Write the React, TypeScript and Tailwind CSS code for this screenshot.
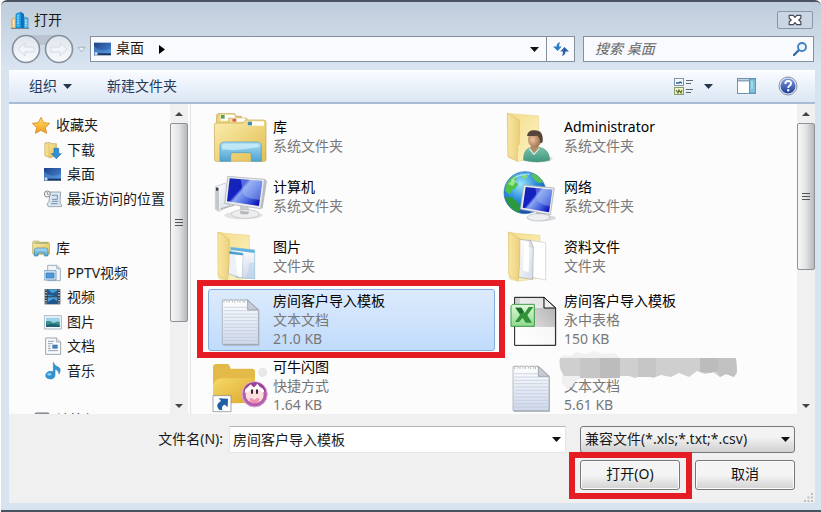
import React from "react";

type IconProps = { box: string; className?: string; children: React.ReactNode };

function Art({ box, className = "h-[54px] w-14", children }: IconProps) {
  return (
    <svg viewBox={box} className={`shrink-0 ${className}`} aria-hidden="true">
      {children}
    </svg>
  );
}

function Defs() {
  const grads: [string, string, string, string, string, string, string][] = [
    ["gFolder", "0", "0", "1", "1", "#fbeeb0", "#e3bd50"],
    ["gFolderPale", "0", "0", "1", "1", "#f3dc8a", "#fdf3c4"],
    ["gFlap", "0", "0", "1", "0", "#f8e7a0", "#ecd07c"],
    ["gBlue", "0", "0", "0", "1", "#a9dcf3", "#4ba3d3"],
    ["gPaper", "0", "0", "1", "1", "#ffffff", "#d3dbe8"],
    ["gDesk", "0", "0", "1", "1", "#1e3f86", "#4a91dc"],
    ["gNote", "0", "0", "0", "1", "#fdfefe", "#cfd8ea"],
    ["gGold", "0", "0", "1", "1", "#f6d868", "#dba92c"],
    ["gStar", "0", "0", "0", "1", "#ffe36a", "#f09a1c"],
    ["gXls", "0", "0", "0", "1", "#e4f9dc", "#8fd98c"],
    ["gSheet", "1", "0", "0", "1", "#a9a9a9", "#ffffff"],
    ["gTeal", "0", "0", "0", "1", "#7cc3ac", "#3f957c"],
    ["gNav", "0", "0", "0", "1", "#dfe5ec", "#f8fafc"],
    ["gHelp", "0", "0", "0", "1", "#7d9ae0", "#1f3d98"],
  ];
  return (
    <svg className="absolute h-0 w-0" aria-hidden="true">
      <defs>
        {grads.map(([id, x1, y1, x2, y2, a, b]) => (
          <linearGradient key={id} id={id} x1={x1} y1={y1} x2={x2} y2={y2}>
            <stop offset="0" stopColor={a} />
            <stop offset="1" stopColor={b} />
          </linearGradient>
        ))}
        <linearGradient id="gScreen" x1="0" y1="0" x2="1" y2="0.7">
          <stop offset="0" stopColor="#1428a8" />
          <stop offset="0.42" stopColor="#1420c4" />
          <stop offset="0.5" stopColor="#8ba6f0" />
          <stop offset="0.75" stopColor="#4a68e0" />
          <stop offset="1" stopColor="#1018b8" />
        </linearGradient>
        <radialGradient id="gGlobe" cx="0.4" cy="0.3" r="0.7">
          <stop offset="0" stopColor="#9be6fb" />
          <stop offset="0.5" stopColor="#2f92de" />
          <stop offset="1" stopColor="#1a4dac" />
        </radialGradient>
        <radialGradient id="gSkin" cx="0.35" cy="0.5" r="0.7">
          <stop offset="0" stopColor="#eec29c" />
          <stop offset="1" stopColor="#8f6040" />
        </radialGradient>
      </defs>
    </svg>
  );
}

/* ---------- large file icons ---------- */

const LibraryBig = () => (
  <Art box="66 30 168 162">
    <path d="M80 72V46q0-5 6-5h48l4 8h16v23z" fill="#eed77f" stroke="#b99a46" strokeWidth="2" />
    <path d="M92 44h40l4 8v10H92z" fill="#fff" />
    <rect x="93" y="45" width="11" height="11" fill="#56a05a" />
    <path d="M116 76V54h54l6 22z" fill="#f1dc8a" stroke="#b99a46" strokeWidth="1.5" />
    <path d="M126 55h40v10h-40z" fill="#fff" />
    <rect x="127" y="56" width="12" height="9" fill="#d9603c" />
    <path d="M73 74q0-5 5-5h82l6-9h54q8 0 8 6v113q0 5-5 5H79q-5 0-5-5z" fill="url(#gFolder)" stroke="#c9a650" strokeWidth="2" />
    <path d="M172 64h50v13h-50z" fill="#fff" />
    <rect x="173" y="65" width="13" height="11" fill="#4a8aa8" />
    <path d="M90 184v-44q0-14 14-14h96q14 0 14 14v44h-30v-20q0-6-6-6h-50q-6 0-6 6v20z" fill="url(#gBlue)" stroke="#4d9cc2" strokeWidth="2" />
    <path d="M95 140q0-9 10-9h94q10 0 10 9-54 14-114 8z" fill="#c9ecf8" opacity=".8" />
  </Art>
);

const ComputerBig = () => (
  <Art box="66 210 168 162">
    <ellipse cx="160" cy="346" rx="58" ry="12" fill="#c9ccd0" opacity=".5" />
    <path d="M76 260l28-10 16 8v60l-34 16-10-6z" fill="url(#gPaper)" stroke="#b7babf" strokeWidth="2" />
    <path d="M77 260l10 4v68l-10-5z" fill="#c3c6ca" />
    <rect x="78" y="263" width="7" height="9" fill="#3c4044" />
    <path d="M92 326l40-10" stroke="#aaa" strokeWidth="3" />
    <path d="M150 318l26 3 2 22h-28z" fill="#c8cbcf" />
    <ellipse cx="166" cy="342" rx="42" ry="13" fill="#eceef0" stroke="#b9bcc0" strokeWidth="2" />
    <path d="M150 333l28 2-4 8h-22z" fill="#b4b7bb" />
    <path d="M113 229l111 9-12 88-108-16z" fill="#e9ebee" stroke="#a2a7ac" strokeWidth="2" />
    <path d="M119 235l98 8-10 75-96-14z" fill="url(#gScreen)" />
    <path d="M152 238l65 5-8 57q-34-4-48-15z" fill="#a8c1f7" opacity=".45" />
    <path d="M224 238l7 5-13 82-6 1z" fill="#b9bdc3" />
  </Art>
);

function OpenFolder({ box, shift, children }: { box: string; shift: number; children?: React.ReactNode }) {
  return (
    <Art box={box}>
      <g transform={`translate(${shift} 0)`}>
        <path d="M84 396l20 4 74 6v128l-66 10-26-8z" fill="url(#gFolderPale)" stroke="#e3cc80" strokeWidth="1.5" />
        {children}
        <path d="M84 396l34 22-1 74-5 50-22-12-6-6z" fill="url(#gFlap)" stroke="#d4b65e" strokeWidth="1.5" />
      </g>
    </Art>
  );
}

const PicturesFolder = () => (
  <OpenFolder box="66 390 168 162" shift={0}>
    <path d="M122 442l72 8v86l-56-4z" fill="url(#gNote)" stroke="#8cb8d4" strokeWidth="2" />
    <path d="M122 442l72 8-1 9-70-9z" fill="#63b3dc" />
    <path d="M117 454l42 6-4 74-40-12z" fill="#edf1f6" stroke="#9db6ca" strokeWidth="2" />
    <path d="M117 454l42 6-1 6-42-5z" fill="#4c9ccb" />
    <path d="M136 466l22 2-3 64-12-4z" fill="#fff" />
    <path d="M178 488h16v46l-24 2z" fill="#a9cbe4" opacity=".4" />
  </OpenFolder>
);

const DataFolder = () => (
  <OpenFolder box="39 390 168 162" shift={-28}>
    <path d="M142 420l53 8v112l-60-12z" fill="#fff" stroke="#c9c9c9" strokeWidth="2" />
    <path d="M116 418l34 4 8 20-2 96-42-6z" fill="url(#gPaper)" stroke="#a4a6a9" strokeWidth="2" />
    <path d="M130 424l17 4-3 88-17-4z" fill="#fff" />
    <path d="M148 422l9 20-12-3z" fill="#e5e5e5" stroke="#aaa" />
  </OpenFolder>
);

const AdminFolder = () => (
  <Art box="39 30 168 162">
    <ellipse cx="150" cy="176" rx="38" ry="10" fill="#c8c8c8" opacity=".5" />
    <path d="M52 40l94 8v122l-62 14-30-12z" fill="url(#gFolderPale)" stroke="#e3cc80" strokeWidth="1.5" />
    <path d="M52 40l36 20v72l-6 6v46l-28-16z" fill="url(#gFlap)" stroke="#d4b65e" strokeWidth="1.5" />
    <path d="M101 181q-2-30 18-38l26-2q34 6 34 40-38 10-78 0z" fill="url(#gTeal)" stroke="#468f78" strokeWidth="1.5" />
    <path d="M122 136h22l2 14-12 10-12-12z" fill="#b98966" />
    <path d="M118 146l14 17 16-18" fill="none" stroke="#d6f0e4" strokeWidth="4" />
    <ellipse cx="134" cy="119" rx="20" ry="23" fill="url(#gSkin)" />
    <path d="M111 108q2-18 23-17 27 0 24 34-3 6-7 3-1-16-9-21-16 2-31 1z" fill="#54443a" />
  </Art>
);

const NetworkBig = () => (
  <Art box="39 210 168 162">
    <circle cx="105" cy="278" r="63" fill="url(#gGlobe)" stroke="#2f6fb4" strokeWidth="2" />
    <path d="M45 272q4-30 26-44l10 4-6 14 10 6-10 14-10 4-6 14z" fill="#4fc24a" />
    <path d="M54 252l16-14 8 6-10 14z" fill="#9be58a" />
    <path d="M46 292l20 0 18 16 8 16-6 14q-32-12-40-46z" fill="#2c9a3a" />
    <path d="M122 219q26 6 38 28l-14 2-12-8-8-10z" fill="#58c05c" />
    <path d="M92 226l18-2 4 8-14 6z" fill="#7ed97a" />
    <path d="M64 242q20-22 56-19" stroke="#e5fbff" strokeWidth="5" fill="none" opacity=".55" />
    <ellipse cx="154" cy="354" rx="44" ry="10" fill="#c3c5c9" opacity=".6" />
    <path d="M138 338h28v15h-28z" fill="#b4b7bb" />
    <ellipse cx="146" cy="352" rx="34" ry="11" fill="#eceef0" stroke="#b4b7bb" strokeWidth="2" />
    <path d="M101 255l92 9-12 80-90-16z" fill="#e9ebee" stroke="#9fa4a9" strokeWidth="2" />
    <path d="M107 261l80 8-10 68-79-14z" fill="url(#gScreen)" />
    <path d="M136 264l51 5-8 50q-26-6-37-16z" fill="#a8c1f7" opacity=".4" />
  </Art>
);

function Notepad({ box, x, y }: { box: string; x: number; y: number }) {
  return (
    <Art box={box}>
      <g transform={`translate(${x} ${y})`}>
        <path d="M3 4h76l32 29v106H3z" fill="#9ca1a8" opacity=".7" />
        <path d="M0 2h76l32 30v103H0z" fill="url(#gNote)" stroke="#9a9fa6" strokeWidth="2" />
        {[24, 34, 44, 54, 64, 74, 84, 94, 104, 114, 124].map((v) => (
          <path key={v} d={`M4 ${v}h${v < 34 ? 70 : 100}`} stroke="#bcc7dc" strokeWidth="2" />
        ))}
        {[6, 22, 38, 54, 68].map((v) => (
          <path key={v} d={`M${v} 10a5 5 0 1 1 8-1`} fill="#fff" stroke="#8e9298" strokeWidth="2" />
        ))}
        <path d="M76 2v30h32z" fill="#c7ccd4" stroke="#888d94" strokeWidth="2" />
      </g>
    </Art>
  );
}

const SheetBig = () => (
  <Art box="39 24 168 162">
    <path d="M74 37h88l35 32v112H74z" fill="url(#gSheet)" stroke="#111" strokeWidth="3" />
    <path d="M76 39h14v18H76z" fill="#d2d2d2" />
    <path d="M90 39h70v30h-70z" fill="#fff" opacity=".6" />
    <path d="M77 126h117v52H77z" fill="#fff" opacity=".85" />
    <path d="M162 37v32h35z" fill="#eee" stroke="#111" strokeWidth="3" />
    <path d="M68 58h65v66H63V64z" fill="url(#gXls)" stroke="#3d9a48" strokeWidth="3" />
    <path d="M76 68h18l10 16 12-18h14L112 91l14 22h-19l-9-14-11 12H75l15-21z" fill="#2f9138" />
    <path d="M76 68h18l7 12-8 7z" fill="#1c6d2c" />
  </Art>
);

const ShortcutBig = () => (
  <Art box="66 252 168 162">
    <path d="M69 276q0-9 9-9h34q5 0 7 6l3 8h64q9 0 9 9v88q0 5-6 5H75q-6 0-6-6z" fill="#e3ba48" />
    <path d="M69 386v-56q6-18 24-20h102v68q0 5-6 5z" fill="url(#gGold)" />
    <circle cx="218" cy="292" r="14" fill="#e8e8ea" />
    <circle cx="194" cy="358" r="38" fill="#b65dae" stroke="#ddb2d8" strokeWidth="3" />
    <path d="M162 342q8-20 32-20t32 20v8l-32-14-32 14z" fill="#9c4298" />
    <ellipse cx="194" cy="360" rx="27" ry="24" fill="#fbe0df" />
    <path d="M165 354q-3-12 9-18l8-8 10 10 10-12 8 10q14 6 12 16-8 2-14-8-8 4-20-2-12 8-23 12z" fill="#fff" />
    <path d="M186 346v8M201 346v8" stroke="#3b2332" strokeWidth="6" strokeLinecap="round" />
    <path d="M178 371q8-6 15 4 8-10 16-4-3 14-16 14t-15-14z" fill="#ef92b0" />
    <path d="M69 362h54v48H69z" fill="#fff" stroke="#7c7c7c" strokeWidth="2" />
    <path d="M86 370l28 1-1 26-8-8q-12 2-8 17l-10-2q-14-14 6-26z" fill="#1f5fa5" />
  </Art>
);

/* ---------- small tree icons ---------- */

const small = "h-[18px] w-[18px]";

const StarIcon = () => (
  <Art box="96 45 54 54" className={small}>
    <path d="M123 49l8 16 18 2-13 13 4 17-17-9-17 9 4-17-13-13 18-2z" fill="url(#gStar)" stroke="#d98a24" strokeWidth="2.5" />
  </Art>
);
const DownloadIcon = () => (
  <Art box="132 120 54 54" className={small}>
    <path d="M135 126l14-2v4h20v36l-18 6-16-6z" fill="url(#gFolder)" stroke="#c2a04a" strokeWidth="2" />
    <path d="M135 126l12 5v38l-12-6z" fill="#f5dc86" stroke="#c2a04a" />
    <path d="M162 142h14v16h8l-15 15-15-15h8z" fill="#2f92d8" stroke="#1f6fb0" strokeWidth="2" />
  </Art>
);
const DesktopIcon = () => (
  <Art box="132 195 54 54" className={small}>
    <path d="M132 204h51v37h-51z" fill="url(#gDesk)" />
    <path d="M132 214q20 22 51 8v14h-51z" fill="#67a9ea" opacity=".4" />
    <path d="M132 236h51v6h-51z" fill="#183762" />
    <circle cx="138" cy="237" r="5" fill="#b9d9ef" />
  </Art>
);
const RecentIcon = () => (
  <Art box="132 270 54 54" className={small}>
    <path d="M150 276h32l-2 34q6 2 5 10h-40l-4-8 6-8z" fill="#dce5ed" stroke="#8d9bab" strokeWidth="2.5" />
    <path d="M156 286h16v12h-16M156 304h18M153 311h20" fill="none" stroke="#6d91b8" strokeWidth="3" />
    <circle cx="142" cy="282" r="9" fill="#f3f5f6" stroke="#85898e" strokeWidth="3" />
    <path d="M142 276v7h5" fill="none" stroke="#666" strokeWidth="2" />
  </Art>
);
const LibraryIcon = () => (
  <Art box="96 417 54 54" className={small}>
    <path d="M98 427q0-4 4-4h14l3 4h26q4 0 4 4v28q0 4-4 4h-43q-4 0-4-4z" fill="url(#gFolder)" stroke="#b6a24b" strokeWidth="2" />
    <path d="M102 429h42" stroke="#7aa26b" strokeWidth="3" />
    <path d="M103 468v-17q0-7 7-7h27q7 0 7 7v17h-11v-9h-19v9z" fill="url(#gBlue)" stroke="#3e88ad" strokeWidth="2" />
  </Art>
);
const PptvIcon = () => (
  <Art box="132 114 54 54" className={small}>
    <path d="M143 118h27l11 10v36h-38z" fill="#f2f5f9" stroke="#8da1b5" strokeWidth="2.5" />
    <path d="M170 118v10h11" fill="#ccd9e5" stroke="#8da1b5" strokeWidth="2" />
    <path d="M132 134h36v28h-36z" fill="#d7e8f5" stroke="#6b94bb" strokeWidth="2.5" />
    <path d="M138 141h24v15h-24z" fill="#4b9bdc" stroke="#2f70ae" strokeWidth="2" />
  </Art>
);
const VideoIcon = () => (
  <Art box="132 190 54 54" className={small}>
    <path d="M134 193h47v46h-47z" fill="#2e3c4b" />
    <path d="M143 194h29v21h-29zM143 218h29v20h-29z" fill="#4b9fd6" />
    <path d="M143 194l14 12 15-8v17l-29-4zM143 232l18-10 11 8v8h-29z" fill="#22568b" />
    {[196, 204, 212, 220, 228, 235].map((v) => (
      <path key={v} d={`M136 ${v}h4M175 ${v}h4`} stroke="#e6edf2" strokeWidth="3.5" />
    ))}
  </Art>
);
const ImageIcon = () => (
  <Art box="132 265 54 54" className={small}>
    <path d="M133 273h51v40h-51z" fill="#f7fafc" stroke="#96a9ba" strokeWidth="2.5" />
    <path d="M138 279h41v28h-41z" fill="#9cd3ec" />
    <path d="M138 290q14-4 22 5 10-6 19-4v16h-41z" fill="#3a9187" />
    <path d="M138 300q20-5 41 1v6h-41z" fill="#1f627a" />
  </Art>
);
const DocumentIcon = () => (
  <Art box="132 335 54 54" className={small}>
    <path d="M137 338h32l13 12v37h-45z" fill="#fafbfc" stroke="#8c949d" strokeWidth="2.5" />
    <path d="M169 338v12h13" fill="#dde2e8" stroke="#8c949d" strokeWidth="2" />
    <path d="M144 348h18M144 355h14M144 362h8M144 369h8M144 376h30" stroke="#7b8ca3" strokeWidth="2.5" />
    <path d="M157 358h16v12h-16z" fill="#467fb5" />
  </Art>
);
const MusicIcon = () => (
  <Art box="132 410 54 54" className={small}>
    <path d="M160 411q4 12 16 15 9 6 1 20 0-12-12-14v16q0 13-15 13-13-1-13-11 1-11 15-12l8 1z" fill="#2f93d4" stroke="#2374ad" strokeWidth="1.5" />
    <ellipse cx="148" cy="447" rx="6" ry="4" fill="#8dd0f3" />
  </Art>
);
const DrivesIcon = () => (
  <Art box="0 0 18 18" className={small}>
    <rect x="3" y="2" width="14" height="11" rx="1" fill="#9aa2ab" stroke="#74797f" />
    <rect x="5" y="4" width="10" height="7" fill="#3560c4" />
    <rect x="6" y="14" width="8" height="3" fill="#b5b9be" />
  </Art>
);

/* ---------- controls ---------- */

const Caret = ({ className = "text-[#111]" }: { className?: string }) => (
  <svg viewBox="0 0 9 5" className={`h-[5px] w-[9px] shrink-0 ${className}`} aria-hidden="true">
    <path d="M0 0h9L4.500 5z" fill="currentColor" />
  </svg>
);

const ScrollArrow = ({ className = "" }: { className?: string }) => (
  <svg viewBox="0 0 8 4" className={`h-1 w-2 ${className}`} aria-hidden="true">
    <path d="M0 0h8L4 4z" fill="#444" />
  </svg>
);

function ScrollBar({ thumb, label }: { thumb: string; label: string }) {
  return (
    <div className="flex w-[18px] shrink-0 flex-col bg-[#f0f0f0]" role="group" aria-label={label}>
      <button type="button" aria-label="向上滚动" className="flex h-[19px] shrink-0 items-center justify-center">
        <ScrollArrow className="rotate-180" />
      </button>
      <div className={`flex shrink-0 flex-col items-center justify-center gap-[2px] rounded-[2px] border border-[#8f9296] bg-linear-to-r from-[#f7f7f7] via-[#e2e3e4] to-[#b6b8bb] ${thumb}`}>
        <span className="h-px w-2 bg-[#555]" />
        <span className="h-px w-2 bg-[#555]" />
        <span className="h-px w-2 bg-[#555]" />
      </div>
      <div className="flex-1" />
      <button type="button" aria-label="向下滚动" className="flex h-[17px] shrink-0 items-center justify-center">
        <ScrollArrow />
      </button>
    </div>
  );
}

function TreeRow({ icon, label, child }: { icon: React.ReactNode; label: string; child?: boolean }) {
  return (
    <li className={`flex items-center whitespace-nowrap ${child ? "gap-[5px] pl-[35px]" : "gap-1.5 pl-[23px]"}`}>
      {icon}
      <span>{label}</span>
    </li>
  );
}

type FileEntry = { name?: string; kind: string; size?: string; icon: React.ReactNode; selected?: boolean };

const files: FileEntry[] = [
  { name: "库", kind: "系统文件夹", icon: <LibraryBig /> },
  { name: "Administrator", kind: "系统文件夹", icon: <AdminFolder /> },
  { name: "计算机", kind: "系统文件夹", icon: <ComputerBig /> },
  { name: "网络", kind: "系统文件夹", icon: <NetworkBig /> },
  { name: "图片", kind: "文件夹", icon: <PicturesFolder /> },
  { name: "资料文件", kind: "文件夹", icon: <DataFolder /> },
  { name: "房间客户导入模板", kind: "文本文档", size: "21.0 KB", icon: <Notepad box="66 54 168 162" x={97} y={73} />, selected: true },
  { name: "房间客户导入模板", kind: "永中表格", size: "150 KB", icon: <SheetBig /> },
  { name: "可牛闪图", kind: "快捷方式", size: "1.64 KB", icon: <ShortcutBig /> },
  { kind: "文本文档", size: "5.61 KB", icon: <Notepad box="39 222 168 162" x={69} y={242} /> },
];

/* Mosaic patch that hides the file name. */
const Mosaic = () => (
  <svg viewBox="0 0 182 44" className="absolute -top-1.5 -left-1.5 h-11 w-[182px]" aria-hidden="true">
    <path d="M1 9l4-5 8 1 5-4 10 2 8-3 9 3 12-1 4 4v5H1z" fill="#f0f0f0" />
    <path d="M4 24h54v4H20l-7 8-4 2-5-6z" fill="#f0f0f0" />
    <path d="M2 7h176l1 14-3 5-8-3-6 3-7-5-8 2-8-3-8 6-10-4-8 4-10-2-8 3-8-3-10 3-6-2H6q-6-8-4-18z" fill="#cfcfcf" />
    <path d="M22 7h20v20H22zM80 7h18v19H80z" fill="#c6c6c6" />
    <path d="M42 7h20v20H42zM142 7h18v13l-8 2-10-1z" fill="#bcbcbc" />
    <path d="M160 7h18l1 14-3 5-8-3-6 3-2-5z" fill="#c2c2c2" />
  </svg>
);

function FileTile({ file }: { file: FileEntry }) {
  return (
    <li className={`flex items-center ${file.size ? "h-[66px]" : "h-[60px]"}`}>
      <div
        className={`relative flex h-[62px] w-full items-center gap-[5px] rounded-[3px] border pl-[3px] ${
          file.selected ? "border-[#84acdd] bg-linear-to-b from-[#dcebfc] to-[#c1dbfc]" : "border-transparent"
        }`}
      >
        {file.icon}
        <div className="relative pb-0.5 leading-[19px] whitespace-nowrap">
          <div className="h-[19px] text-black">{file.name}</div>
          <div className="text-[#777]">{file.kind}</div>
          {file.size && <div className="text-[#777]">{file.size}</div>}
          {!file.name && <Mosaic />}
        </div>
        {file.selected && (
          <div className="pointer-events-none absolute -top-[10px] -right-[11px] -bottom-[8px] -left-[12px] z-10 border-6 border-[#e51c23]" />
        )}
      </div>
    </li>
  );
}

const pushButton =
  "h-[30px] w-[100px] rounded-[3px] border border-[#777] bg-linear-to-b from-[#f4f4f4] from-50% to-[#d2d2d2] pb-0.5 text-center text-[#111] shadow-[inset_0_0_0_1px_#fbfbfb]";

export default function App() {
  return (
    <div className="relative w-full bg-white pl-px font-['Noto_Sans','Noto_Sans_CJK_SC',sans-serif] text-[14px] leading-5 text-[#1a1a1a]">
      <Defs />
      <div className="rounded-t-[6px] border-t-2 border-b-2 border-t-[#4a5261] border-b-[#46535f] bg-[#d7e4f0]">
        <div className="rounded-t-[5px] bg-linear-to-b from-[#bfccdb] to-[#d9e5f1] pb-2">
          <header className="flex h-[34px] items-center pt-0.5 pr-2 pl-[10px]">
            <svg viewBox="0 0 18 18" className="h-[18px] w-[18px]" aria-hidden="true">
              <path d="M1 8l4-2v11H1z" fill="#efcf9c" stroke="#c69855" strokeWidth=".7" />
              <path d="M5 3l5-2v16H5z" fill="#24a6e8" stroke="#137bc0" strokeWidth=".6" />
              <path d="M10 1l3 2v14h-3z" fill="#0d70bd" />
              <path d="M13 6l4 1v10h-4z" fill="#56bdea" stroke="#2580b5" strokeWidth=".6" />
              <path d="M7 4v11M2.500 9v6M15 9v6" stroke="#fff" strokeWidth=".9" strokeDasharray="1.500 1" />
              <path d="M0 17.500h18" stroke="#6f8598" />
            </svg>
            <h1 className="ml-[5px] flex-1">打开</h1>
            <button type="button" aria-label="关闭" className="flex h-[18px] w-[36px] items-center justify-center rounded-[2px] border border-[#8896a8] bg-[#cad6e3]">
              <svg viewBox="1 1 12 10" className="h-3 w-3.5" aria-hidden="true">
                <path d="M2 2h3.500L7 3.800 8.500 2H12v2.500L10.200 6 12 7.500V10H8.500L7 8.200 5.500 10H2V7.500L3.800 6 2 4.500z" fill="#fff" stroke="#454b55" strokeWidth="1" strokeLinejoin="round" />
              </svg>
            </button>
          </header>

          <nav className="flex h-[26px] items-center pr-[7px] pl-[9px]">
            <svg viewBox="0 0 66 32" className="-my-1 h-8 w-[66px] shrink-0" role="img" aria-label="后退 前进">
              <path d="M14 2h38v6q-19 8-38 0z" fill="#b9c4d0" />
              <circle cx="16" cy="16" r="13.500" fill="url(#gNav)" stroke="#858f9b" strokeWidth="1.600" />
              <circle cx="49" cy="16" r="13.500" fill="url(#gNav)" stroke="#858f9b" strokeWidth="1.600" />
              <path d="M8 16l7-6v4h9v5h-9v4z" fill="#f1f4f8" stroke="#d3dae2" />
              <path d="M57 16l-7-6v4h-9v5h9v4z" fill="#f1f4f8" stroke="#d3dae2" />
            </svg>
            <svg viewBox="0 0 10 7" className="mr-[4px] ml-px h-[7px] w-[9px] shrink-0" aria-hidden="true">
              <path d="M1 1h8L5 6z" fill="#eef3f8" stroke="#a0adbb" />
            </svg>
            <div className="flex h-[26px] min-w-0 flex-1 items-center border border-[#84909d] bg-[#f8fafd]">
              <div className="flex flex-1 items-center pl-[3px]">
                <svg viewBox="132 202 54 42" className="h-3.5 w-[18px]" aria-hidden="true">
                  <path d="M132 204h51v37h-51z" fill="url(#gDesk)" />
                  <path d="M132 214q20 22 51 8v14h-51z" fill="#67a9ea" opacity=".4" />
                  <path d="M132 236h51v6h-51z" fill="#183762" />
                  <circle cx="138" cy="237" r="5" fill="#b9d9ef" />
                </svg>
                <span className="ml-1 pb-0.5">桌面</span>
                <svg viewBox="0 0 6 9" className="ml-[15px] h-[9px] w-1.5" aria-hidden="true">
                  <path d="M0 0v9l6-4.500z" fill="#000" />
                </svg>
              </div>
              <button type="button" aria-label="以前的位置" className="px-[7px] py-2">
                <Caret />
              </button>
              <button type="button" aria-label="刷新" className="flex h-full w-[28px] items-center justify-center border-l border-[#84909d]">
                <svg viewBox="0 0 16 14" className="h-3.5 w-4" aria-hidden="true">
                  <path d="M7 0Q3.500 1 3.500 4.500H0L4.700 9l4-4.500H6Q6 2.500 7 0z" fill="#2f7bc4" />
                  <path d="M9 14q3.500-1 3.500-4.500H16L11.500 5 7.300 9.500H10Q10 12 9 14z" fill="#2b5fa8" />
                </svg>
              </button>
            </div>
            <label className="ml-2 flex h-[26px] w-[231px] items-center border border-[#84909d] bg-[#f8fafd] pr-1.5 pl-[11px]">
              <input type="search" aria-label="搜索 桌面" placeholder="搜索 桌面" className="min-w-0 flex-1 bg-transparent italic outline-none placeholder:text-[#666]" />
              <svg viewBox="0 0 14 14" className="h-3.5 w-3.5" aria-hidden="true">
                <path d="M6 8l-5 5" stroke="#3a6ea5" strokeWidth="2.400" strokeLinecap="round" />
                <circle cx="9" cy="5" r="4" fill="#eaf5fd" stroke="#3f7fbd" strokeWidth="1.800" />
              </svg>
            </label>
          </nav>
        </div>

        <div className="mr-[6px] ml-2">
          <div className="flex h-[34px] items-center border-b-2 border-[#a9bcd6] bg-linear-to-b from-[#fbfdff] via-[#eaf1fa] to-[#dce6f4] pr-[17px] pl-[20px] text-[#1e395b]">
            <button type="button" className="flex items-center gap-1.5">
              组织 <Caret className="text-[#26364e]" />
            </button>
            <button type="button" className="ml-[35px]">新建文件夹</button>
            <div className="flex-1" />
            <button type="button" aria-label="更改视图" className="flex items-center gap-[11px]">
              <svg viewBox="0 0 19 17" className="h-[17px] w-[19px]" aria-hidden="true">
                <rect x=".5" y=".5" width="9" height="7" fill="#f4f8fa" stroke="#8096a7" />
                <rect x=".5" y="9.500" width="9" height="7" fill="#eef3c8" stroke="#8b9b6c" />
                <path d="M2 5h3l1-1 2 1" stroke="#25639a" fill="none" strokeWidth="1.400" />
                <path d="M2 12l2 3 1-3 2 3 1-3" stroke="#58722d" fill="none" strokeWidth="1.200" />
                <path d="M12 2.500h7M12 5.500h5M12 11.500h7M12 14.500h5" stroke="#5f6770" strokeWidth="1.200" />
              </svg>
              <Caret className="text-[#26364e]" />
            </button>
            <button type="button" aria-label="显示预览窗格" className="ml-[24px]">
              <svg viewBox="0 0 19 16" className="h-4 w-[19px]" aria-hidden="true">
                <rect x=".5" y=".5" width="18" height="15" fill="#fff" stroke="#6d93b2" />
                <path d="M1 2.500h11" stroke="#8aa7c0" strokeWidth="2" />
                <rect x="12.500" y="1" width="6" height="14" fill="#7fc2dc" stroke="#5b9bb9" />
                <path d="M15 3v8" stroke="#c7eaf6" />
              </svg>
            </button>
            <button type="button" aria-label="获取帮助" className="ml-[22px]">
              <svg viewBox="0 0 20 20" className="h-5 w-5" aria-hidden="true">
                <circle cx="10" cy="10" r="9" fill="#e3e8f2" stroke="#8791a8" />
                <circle cx="10" cy="10" r="7.500" fill="url(#gHelp)" />
                <path d="M7.300 8q0-3 2.900-3t2.800 2.400q0 1.500-1.500 2.300-1.200.7-1.200 2.200" fill="none" stroke="#fff" strokeWidth="1.900" />
                <circle cx="10.200" cy="14.300" r="1.200" fill="#fff" />
              </svg>
            </button>
          </div>

          <div className="flex h-[310px] overflow-hidden bg-[#fcfcfc]">
            <aside className="flex w-[182px] shrink-0 border-r border-[#dfe3e8]">
              <div className="min-w-0 flex-1 overflow-hidden pt-[9px]">
                <ul className="grid h-[98px] auto-rows-fr">
                  <TreeRow icon={<StarIcon />} label="收藏夹" />
                  <TreeRow child icon={<DownloadIcon />} label="下载" />
                  <TreeRow child icon={<DesktopIcon />} label="桌面" />
                  <TreeRow child icon={<RecentIcon />} label="最近访问的位置" />
                </ul>
                <ul className="mt-[25px] grid h-[147px] auto-rows-fr">
                  <TreeRow icon={<LibraryIcon />} label="库" />
                  <TreeRow child icon={<PptvIcon />} label="PPTV视频" />
                  <TreeRow child icon={<VideoIcon />} label="视频" />
                  <TreeRow child icon={<ImageIcon />} label="图片" />
                  <TreeRow child icon={<DocumentIcon />} label="文档" />
                  <TreeRow child icon={<MusicIcon />} label="音乐" />
                </ul>
                <ul className="mt-[27px]">
                  <TreeRow icon={<DrivesIcon />} label="计算机" />
                </ul>
              </div>
              <ScrollBar thumb="h-[199px]" label="导航窗格滚动条" />
              <div className="w-0.5" />
            </aside>
            <ul className="grid min-w-0 flex-1 auto-rows-min grid-cols-2 gap-x-1 pt-[3px] pr-[11px] pl-[17px]">
              {files.map((f, i) => (
                <FileTile key={i} file={f} />
              ))}
            </ul>
            <ScrollBar thumb="h-[147px]" label="文件列表滚动条" />
          </div>

          <form className="relative bg-[#f0f0f0] pt-3 pr-[20px] pb-[13px]" onSubmit={(e) => e.preventDefault()}>
            <div className="flex items-center">
              <label htmlFor="filename" className="w-[214px] shrink-0 pb-0.5 text-right">
                文件名(N):
              </label>
              <div className="ml-1.5 flex h-[27px] min-w-0 flex-1 items-center border border-[#e6e6e6] border-t-[#b5b5b5] bg-white pr-1 pl-[3px]">
                <input id="filename" type="text" defaultValue="房间客户导入模板" className="min-w-0 flex-1 bg-transparent outline-none" />
                <button type="button" aria-label="显示历史文件名">
                  <Caret />
                </button>
              </div>
              <div className="relative ml-[14px] w-[215px] shrink-0">
                <select aria-label="文件类型" className="block h-[27px] w-full appearance-none rounded-[3px] border border-[#777] bg-linear-to-b from-[#f3f3f3] from-40% to-[#d0d0d0] pr-5 pb-0.5 pl-1 outline-none">
                  <option>兼容文件(*.xls;*.txt;*.csv)</option>
                </select>
                <span className="pointer-events-none absolute top-[11px] right-[5px] flex">
                  <Caret />
                </span>
              </div>
            </div>
            <div className="mt-[7px] flex justify-end gap-[15px]">
              <div className="relative">
                <button type="submit" className={pushButton}>打开(O)</button>
                <div className="pointer-events-none absolute -top-[8px] -right-[12px] -bottom-[9px] -left-[11px] border-6 border-[#e51c23]" />
              </div>
              <button type="button" className={pushButton}>取消</button>
            </div>
            <svg viewBox="0 0 10 10" className="absolute right-[2px] bottom-px h-[10px] w-[10px]" aria-hidden="true">
              <path d="M8 1h2v2H8zM8 4.500h2v2H8zM4.500 4.500h2v2h-2zM8 8h2v2H8zM4.500 8h2v2h-2zM1 8h2v2H1z" fill="#b9bfc5" />
            </svg>
          </form>
          <div className="h-[7px]" />
        </div>
      </div>
    </div>
  );
}
